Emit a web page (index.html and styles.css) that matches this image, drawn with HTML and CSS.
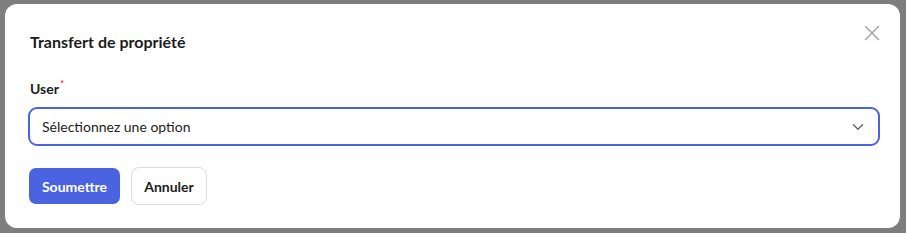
FILE: index.html
```html
<!DOCTYPE html>
<html lang="fr">
<head>
<meta charset="utf-8">
<title>Transfert de propriété</title>
<link rel="stylesheet" href="styles.css">
</head>
<body>
<div class="backdrop">
  <div class="modal">
    <div class="modal-head">
      <h2 class="modal-title">Transfert de propriété</h2>
      <button class="close" aria-label="Fermer">
        <svg width="16" height="16" viewBox="0 0 16 16"><path d="M1.5 1.5L14.5 14.5M14.5 1.5L1.5 14.5" stroke="#a3a3a3" stroke-width="1.5" fill="none" stroke-linecap="round"/></svg>
      </button>
    </div>
    <div class="field">
      <label class="label">User<span class="req">*</span></label>
      <div class="select">
        <span>Sélectionnez une option</span>
        <svg width="12" height="8" viewBox="0 0 12 8"><path d="M1.5 1.8L6 6.2L10.5 1.8" stroke="#6b6b6b" stroke-width="1.5" fill="none" stroke-linecap="round" stroke-linejoin="round"/></svg>
      </div>
    </div>
    <div class="actions">
      <button class="btn btn-primary">Soumettre</button>
      <button class="btn btn-secondary">Annuler</button>
    </div>
  </div>
</div>
</body>
</html>
```
FILE: styles.css
```css
html, body {
  margin: 0;
  padding: 0;
}
body {
  background: #7e7e7e;
  font-family: "Lato", "Noto Sans", sans-serif;
  color: #1c1c1c;
}
.backdrop {
  width: 906px;
  height: 233px;
  padding: 4px 6px 5px 5px;
  box-sizing: border-box;
  overflow: hidden;
}
.modal {
  background: #fff;
  border-radius: 12px;
  height: 224px;
  box-sizing: border-box;
  padding: 20px 20px 0 23px;
}
.modal-head {
  display: flex;
  justify-content: space-between;
  align-items: flex-start;
}
.modal-title {
  margin: 7px 0 0 2px;
  font-size: 16px;
  font-weight: 700;
  line-height: 22px;
  color: #1c1c1c;
}
.close {
  border: 0;
  background: none;
  padding: 0;
  margin: 1px 0 0 0;
  width: 16px;
  height: 16px;
  display: flex;
}
.field {
  margin-top: 20px;
  display: flex;
  flex-direction: column;
}
.label {
  font-size: 14px;
  font-weight: 700;
  line-height: 20px;
  margin-left: 2px;
}
.req {
  color: #e0454a;
  font-size: 10px;
  vertical-align: 7px;
  margin-left: 1px;
}
.select {
  margin-top: 8px;
  height: 39px;
  box-sizing: border-box;
  border: 2px solid #4a63e0;
  border-radius: 9px;
  display: flex;
  align-items: center;
  justify-content: space-between;
  padding: 0 14px 0 12px;
  font-size: 14px;
  color: #1c1c1c;
}
.actions {
  display: flex;
  gap: 11px;
  margin-top: 21px;
  align-items: center;
  padding-left: 1px;
}
.btn {
  font-family: inherit;
  font-size: 14px;
  font-weight: 700;
  border-radius: 7px;
  cursor: pointer;
}
.btn-primary {
  background: #4a63e0;
  color: #fff;
  border: 0;
  height: 36px;
  width: 91px;
}
.btn-secondary {
  background: #fff;
  color: #1c1c1c;
  border: 1px solid #dcdcdc;
  height: 38px;
  width: 76px;
  border-radius: 8px;
}
```
